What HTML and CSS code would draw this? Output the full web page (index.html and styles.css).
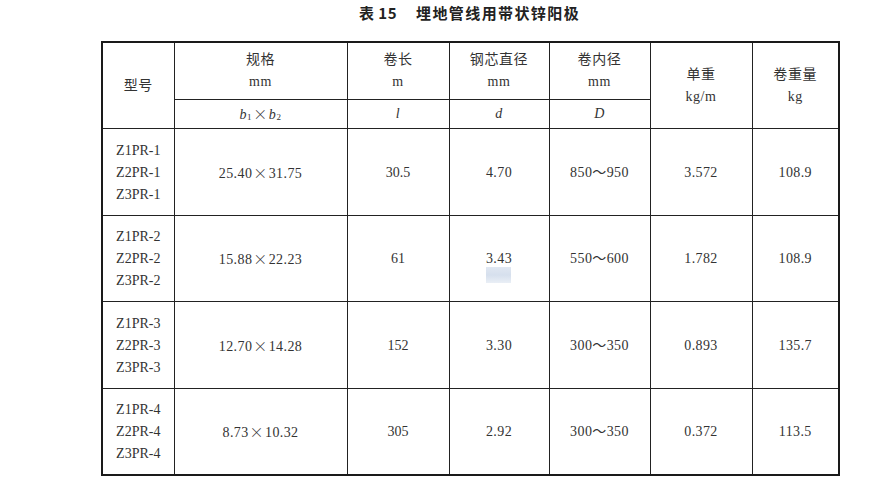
FILE: index.html
```html
<!DOCTYPE html>
<html lang="zh">
<head>
<meta charset="utf-8">
<title>表 15 埋地管线用带状锌阳极</title>
<link rel="stylesheet" href="styles.css">
</head>
<body>
<div class="page">
  <h1 class="title"><span class="num">表 15</span><span class="name">埋地管线用带状锌阳极</span></h1>
  <table class="spec">
    <colgroup>
      <col class="c1"><col class="c2"><col class="c3"><col class="c4"><col class="c5"><col class="c6"><col class="c7">
    </colgroup>
    <thead>
      <tr class="h1">
        <th rowspan="2">型号</th>
        <th>规格<br>mm</th>
        <th>卷长<br>m</th>
        <th>钢芯直径<br>mm</th>
        <th>卷内径<br>mm</th>
        <th rowspan="2">单重<br>kg/m</th>
        <th rowspan="2">卷重量<br>kg</th>
      </tr>
      <tr class="h2">
        <th><i>b</i><sub>1</sub><span class="x">×</span><i>b</i><sub>2</sub></th>
        <th><i>l</i></th>
        <th><i>d</i></th>
        <th><i>D</i></th>
      </tr>
    </thead>
    <tbody>
      <tr>
        <td>Z1PR-1<br>Z2PR-1<br>Z3PR-1</td>
        <td class="n">25.40<span class="x">×</span>31.75</td><td>30.5</td><td class="n">4.70</td><td class="n">850～950</td><td class="n">3.572</td><td class="n">108.9</td>
      </tr>
      <tr>
        <td>Z1PR-2<br>Z2PR-2<br>Z3PR-2</td>
        <td class="n">15.88<span class="x">×</span>22.23</td><td>61</td><td class="n">3.43</td><td class="n">550～600</td><td class="n">1.782</td><td class="n">108.9</td>
      </tr>
      <tr>
        <td>Z1PR-3<br>Z2PR-3<br>Z3PR-3</td>
        <td class="n">12.70<span class="x">×</span>14.28</td><td>152</td><td class="n">3.30</td><td class="n">300～350</td><td class="n">0.893</td><td class="n">135.7</td>
      </tr>
      <tr>
        <td>Z1PR-4<br>Z2PR-4<br>Z3PR-4</td>
        <td class="n">8.73<span class="x">×</span>10.32</td><td>305</td><td class="n">2.92</td><td class="n">300～350</td><td class="n">0.372</td><td class="n">113.5</td>
      </tr>
    </tbody>
  </table>
</div>
<span class="smudge"></span>
</body>
</html>
```
FILE: styles.css
```css
html, body {
  margin: 0;
  padding: 0;
  background: #ffffff;
}
body {
  width: 888px;
  height: 494px;
  overflow: hidden;
  position: relative;
  font-family: "Liberation Serif", "Noto Sans CJK SC", serif;
  color: #333333;
}
.page {
  width: 737px;
  margin-left: 101px;
}
.title {
  margin: 0;
  height: 41px;
  display: flex;
  justify-content: center;
  align-items: flex-start;
  padding-top: 4px;
  box-sizing: border-box;
  font-family: "Noto Sans CJK SC", "Liberation Sans", sans-serif;
  font-size: 15px;
  font-weight: bold;
  color: #222222;
  line-height: 18px;
}
.title .num {
  margin-right: 19px;
  letter-spacing: 0.5px;
}
.title .name {
  letter-spacing: 1.4px;
}
.spec {
  border-collapse: collapse;
  table-layout: fixed;
  width: 737px;
  border: 2px solid #1a1a1a;
  font-size: 14px;
  line-height: 22px;
}
.c1 { width: 72px; }
.c2 { width: 173px; }
.c3 { width: 102px; }
.c4 { width: 100px; }
.c5 { width: 101px; }
.c6 { width: 102px; }
.c7 { width: 87px; }
.spec th, .spec td {
  border: 1px solid #222222;
  padding: 0;
  text-align: center;
  vertical-align: middle;
  font-weight: normal;
}
.spec th {
  font-family: "Liberation Serif", "Noto Sans CJK SC", serif;
  letter-spacing: 0.6px;
}
.h1 th {
  height: 56px;
}
.h2 th {
  height: 28px;
}
.spec tbody td {
  height: 83.5px;
  padding-top: 2px;
}
.spec td.n {
  letter-spacing: 0.4px;
}
.spec i {
  font-style: italic;
}
.spec sub {
  font-size: 9px;
  vertical-align: -1px;
  line-height: 0;
}
.spec .x {
  font-family: "Noto Sans CJK SC", sans-serif;
  font-weight: 300;
  margin: 0 1px;
}
.smudge {
  position: absolute;
  left: 486px;
  top: 267px;
  width: 25px;
  height: 16px;
  background: linear-gradient(180deg, #dbe3ef 0%, #cfdaea 50%, #e6ecf4 100%);
  opacity: 0.85;
}
```
